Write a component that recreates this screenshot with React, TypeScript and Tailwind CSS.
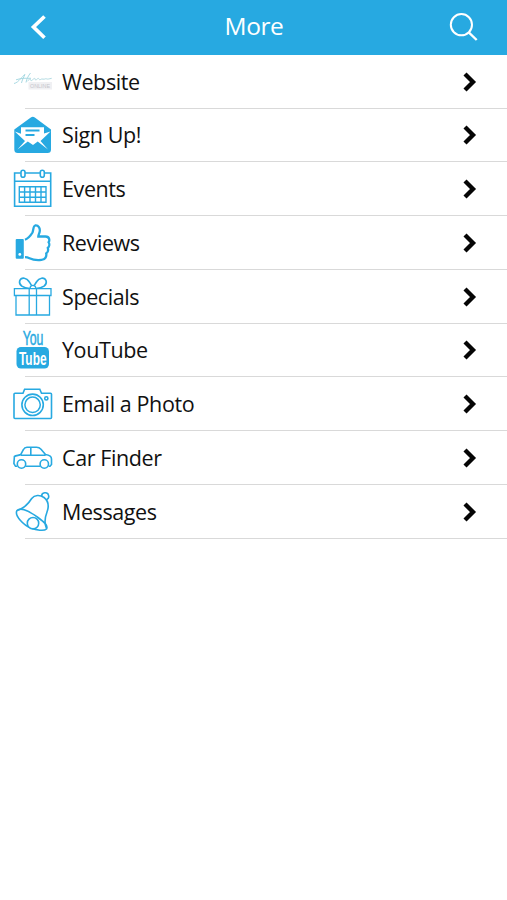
import type { ReactNode } from 'react';

const BLUE = '#27a9e1';

function WebsiteIcon() {
  return (
    <>
      <path d="M1 21.500C6 20.500 9 14 12 12.500C10.500 15.500 9 18.500 8.500 21M17.500 11C15.500 13.500 13.500 17 13 20.500M3 17.800c6-2 10-1.500 15-1.500" stroke="#a0d6e0" strokeWidth=".9" />
      <path d="M14 19.500c2-2 3-3 3.500-2s0 2 2 .3 2.500-1.800 2.700-.5 1 .7 2-.3 1.500-.7 2 .3 1.500 0 2.500-.3 1.500.5 2.500.2 1.500-.8 2.500-.3 2 0 5-.6" stroke="#b2dbe3" strokeWidth="1" />
      <rect x="15.500" y="20" width="23.500" height="7.500" fill="#f0f0f3" stroke="none" />
      <text x="17" y="26" fontSize="6" stroke="none" fill="#c6c6cc" fontFamily="Liberation Sans, sans-serif" textLength="20" lengthAdjust="spacingAndGlyphs">ONLINE</text>
    </>
  );
}

function EnvelopeIcon() {
  return (
    <>
      <path d="M1.300 14.500 17.800 2.400q2-1.500 4 0L38 14.500V34.500q0 3.500-3.500 3.500H4.800q-3.500 0-3.500-3.500Z" fill={BLUE} stroke="none" />
      <path d="M8 12.200H31V18.500L37.500 16.500 27.500 26 35 34.500 24.700 26.500 20 30 14.800 26.500 4.500 34.500 12 26 1.800 16.500 8 18.800Z" fill="#fff" stroke="none" />
      <path d="M12.500 15.500H26.500M12.500 20H21.500" strokeWidth="2.100" />
    </>
  );
}

function CalendarIcon() {
  return (
    <>
      <path d="M7.800 4H1.600V37.300H37.700V4H31.500M12 4H27.200M1.600 12.300H37.700" />
      <rect x="8" y="1.300" width="4" height="7" rx="2" />
      <rect x="27.300" y="1.300" width="4" height="7" rx="2" />
      <path d="M6.300 17.700H33V33.300H6.300ZM6.300 23H33M6.300 28.300H33M11.600 17.700V33.300M17 17.700V33.300M22.500 17.700V33.300M28 17.700V33.300" strokeWidth="1.400" />
    </>
  );
}

function ThumbIcon() {
  return (
    <>
      <path d="M3.700 16H9.800q1 0 1 1V34.700q0 1-1 1H3.700q-1 0-1-1V17q0-1 1-1Z" fill={BLUE} stroke="none" />
      <circle cx="6.800" cy="31.400" r="1.400" fill="#fff" stroke="none" />
      <path d="M12 16.700C15 15.500 18 12 19.500 9.500C20.500 7.500 20 3 22.200 2.500C25.500 2 27.300 5.500 26.700 8.500C26.400 10.500 25.300 11.800 25.300 13.500H32.500C37 13.500 36.600 18 35.600 19.200C37 21.500 36 24 34.800 25C35.600 27.500 34.600 29.500 33.200 30.500C33.800 33 32.500 36.700 28.500 36.900C22.500 37.500 19 36.500 16.500 35.300C14.500 34.300 13.500 34.200 12 34.200" strokeWidth="2.300" />
    </>
  );
}

function GiftIcon() {
  return (
    <>
      <path d="M1.400 11.700H38V18.500H1.400ZM3 18.500V38H36.500V18.500M16.200 11.700V38M23.500 11.700V38" strokeWidth="1.300" />
      <path d="M17 11.500C10 11.500 5.500 8 6.700 3.800C8.500-.5 14 1 16 4.500C17.300 6.500 18 7.500 18.500 8.500M22.700 11.500C30 11.500 34.300 8 33.100 3.800C31.300-.5 25.800 1 23.800 4.500C22.500 6.500 21.500 7.500 21.200 8.500" />
      <path d="M17 11.500Q17 8.400 19.900 8.400T22.800 11.500" strokeWidth="1.200" />
    </>
  );
}

function YouTubeIcon() {
  return (
    <g stroke="none" fontFamily="Liberation Sans Narrow, Liberation Sans, sans-serif">
      <text x="9.700" y="15" fontSize="19.500" fill={BLUE} stroke={BLUE} strokeWidth=".5" textLength="20.700" lengthAdjust="spacingAndGlyphs">You</text>
      <rect x="3.500" y="17" width="32.500" height="21.500" rx="4.500" fill={BLUE} />
      <text x="6" y="34.800" fontSize="19" fontWeight="700" fill="#fff" textLength="27.500" lengthAdjust="spacingAndGlyphs">Tube</text>
    </g>
  );
}

function CameraIcon() {
  return (
    <>
      <path d="M1 10.200q0-1 1-1H10L11.600 5.200H26.800L28.500 9.200H37.500q1 0 1 1V33.500q0 1-1 1H2q-1 0-1-1Z" />
      <circle cx="19.600" cy="20.800" r="10.700" />
      <circle cx="19.600" cy="20.800" r="7.700" strokeWidth="1.500" />
      <circle cx="33.300" cy="14.400" r="1.600" />
    </>
  );
}

function CarIcon() {
  return (
    <>
      <path d="M4 28.300H2.500L.9 25.500 1.400 18.500C3 17.300 6.500 17.500 7.800 16.500L10.500 11.500Q11.500 9.400 14 9.300H23.500Q26.300 9.300 28 11.200L32.500 16.500C36 17 38.500 18.500 38.500 21V26.500L37 28.300H35.700M12.500 28.300H27M7.800 17.200H32.500M17.800 9.500V17" />
      <circle cx="8.500" cy="26" r="4.200" />
      <circle cx="31.300" cy="26" r="4.200" />
    </>
  );
}

function BellIcon() {
  return (
    <>
      <path d="M4 18.500C11 16.500 15.500 11.500 18.700 6.500C21.500 2.800 27 2.700 31 5.500C35.500 9 36 14.500 34 20C31.500 26.500 31 31 33.500 36.500" />
      <path d="M4 18.500C9 14.500 18 20.500 25 25.500C31 30 35.500 33.500 33.500 37C31 39.500 23 38 18 36C11 33.500 1 23.500 4 18.500Z" />
      <path d="M28.700 4.200C28.500.2 34.500-.5 35.500 3C36.300 5.500 35 7.500 33.200 7.700" />
      <circle cx="20" cy="31.200" r="5.700" fill="#fff" />
    </>
  );
}

const items: { label: string; icon: ReactNode }[] = [
  { label: 'Website', icon: <WebsiteIcon /> },
  { label: 'Sign Up!', icon: <EnvelopeIcon /> },
  { label: 'Events', icon: <CalendarIcon /> },
  { label: 'Reviews', icon: <ThumbIcon /> },
  { label: 'Specials', icon: <GiftIcon /> },
  { label: 'YouTube', icon: <YouTubeIcon /> },
  { label: 'Email a Photo', icon: <CameraIcon /> },
  { label: 'Car Finder', icon: <CarIcon /> },
  { label: 'Messages', icon: <BellIcon /> },
];

export default function App() {
  return (
    <div className="min-h-screen w-full bg-white font-['Open_Sans',sans-serif]">
      <header className="grid h-[54.5px] grid-cols-[1fr_auto_1fr] items-center bg-[#27a9e1] pr-7 pl-[29px] text-white">
        <svg width="20" height="28" viewBox="0 0 20 28" fill="none" stroke="currentColor" strokeWidth="3.700" aria-label="Back">
          <path d="M15.500 3.500 4.500 14 15.500 24.800" />
        </svg>
        <h1 className="pb-0.5 text-[24.5px] leading-8 tracking-[-0.4px]">More</h1>
        <svg width="30" height="30" viewBox="0 0 30 30" fill="none" stroke="currentColor" strokeWidth="2" className="justify-self-end" aria-label="Search">
          <circle cx="12.400" cy="12.700" r="10.600" />
          <path d="m19.700 20.300 8 7.700" strokeWidth="2.400" />
        </svg>
      </header>
      <ul className="pt-[0.25px]">
        {items.map(({ label, icon }) => (
          <li key={label} className="flex h-[53.75px] flex-col">
            <div className="flex flex-1 items-center pt-px pr-[30px] pl-[13px]">
              <svg width="40" height="40" viewBox="0 0 40 40" fill="none" stroke={BLUE} strokeWidth="1.600" className="shrink-0 overflow-visible">
                {icon}
              </svg>
              <span className="ml-[9px] flex-1 text-[21.5px] leading-8 tracking-[-0.4px] text-[#111]">{label}</span>
              <svg width="15" height="22" viewBox="0 0 15 22" fill="none" stroke="#050505" strokeWidth="4.300">
                <path d="M3 3 11 11 3 19" />
              </svg>
            </div>
            <div className="ml-[25px] h-px shrink-0 bg-[#d9d9d9]" />
          </li>
        ))}
      </ul>
    </div>
  );
}
